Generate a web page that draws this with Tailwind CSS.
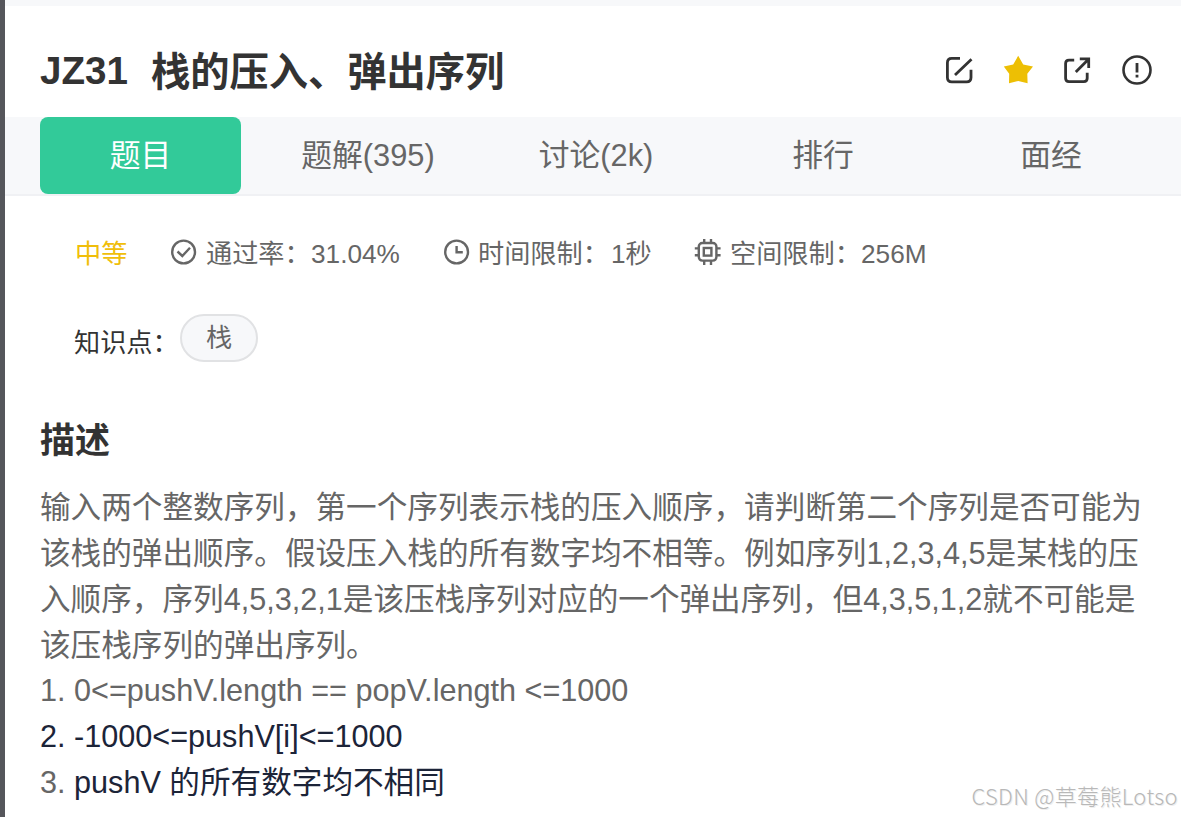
<!DOCTYPE html>
<html lang="zh-CN">
<head>
<meta charset="utf-8">
<title>JZ31 栈的压入、弹出序列</title>
<script src="https://cdn.jsdelivr.net/npm/@tailwindcss/browser@4"></script>
</head>
<body class="relative h-[817px] w-[1181px] overflow-hidden border-l-[5px] border-[#55565b] bg-white font-['Liberation_Sans','Noto_Sans_CJK_SC',sans-serif] whitespace-nowrap text-[#666]">
<div class="h-[6px] bg-[#f7f8fa]"></div>
<header class="flex h-[111px] items-center justify-between pt-[16px] pr-[28px] pl-[35px]">
  <h1 class="flex h-[46px] text-[39.25px] leading-[46px] font-bold text-[#333]"><span class="w-[111px] pt-[1px] text-[38.6px]">JZ31</span><span class="pt-[2px]">栈的压入、弹出序列</span></h1>
  <div class="flex h-[30px] items-center gap-[29px] text-[#333]">
    <svg class="size-[30px]" viewBox="0 0 30 30" fill="none" stroke="currentColor" stroke-width="2.8"><path d="M16 3.400H7.800Q3.400 3.400 3.400 7.800V22.400Q3.400 26.800 7.800 26.800H22.600Q27 26.800 27 22.400V14.800M11 20L27.500 4.200"/></svg>
    <svg class="size-[30px]" viewBox="0 0 30 30" fill="#edbf04"><path d="M15.200 .8L20.200 9.400L30 11.400L24.300 18.700L24.600 28.200L15.200 26L6 28.200L6.200 18.700L.8 11.400L10.200 9.400Z"/></svg>
    <svg class="size-[30px]" viewBox="0 0 30 30" fill="none" stroke="currentColor" stroke-width="2.8"><path d="M12.200 5.200H7Q3.600 5.200 3.600 8.600V23.200Q3.600 26.600 7 26.600H21.800Q25.200 26.600 25.200 23.200V17.800M13.800 17L26 4.800M17.800 3.800H26.700V13"/></svg>
    <svg class="size-[32px]" viewBox="0 0 32 32" fill="none" stroke="currentColor" stroke-width="2.600"><circle cx="16" cy="16" r="13.500"/><path d="M16 9V18.500M16 20.700V23.500" stroke-width="2.800"/></svg>
  </div>
</header>
<nav class="flex h-[79px] border-b-2 border-[#f0f1f4] bg-[#f7f8fa] pl-[35px] text-[30.8px] leading-[77px]">
  <div class="h-[77px] w-[201px] rounded-[8px] bg-[#32ca99] text-center text-white">题目</div>
  <div class="ml-[25px] w-[204px] text-center">题解(395)</div>
  <div class="ml-[24px] w-[204px] text-center">讨论(2k)</div>
  <div class="ml-[23px] w-[204px] text-center">排行</div>
  <div class="ml-[24px] w-[204px] text-center">面经</div>
</nav>
<section class="mt-[40px] flex h-[36px] items-center pl-[70px] text-[26.2px] leading-[36px]">
  <span class="w-[95px] text-[#f0be0a]">中等</span>
  <svg class="mt-[-4px] mr-[8px] size-[28px]" viewBox="0 0 28 28" fill="none" stroke="currentColor" stroke-width="2.400"><circle cx="13.600" cy="14" r="11.400"/><path d="M7.500 13.500L12.300 18L20 9.700"/></svg>
  <span class="flex w-[237px]"><span class="w-[105px]">通过率：</span>31.04%</span>
  <svg class="mt-[-4px] mr-[7px] size-[28px]" viewBox="0 0 28 28" fill="none" stroke="currentColor" stroke-width="2.400"><circle cx="13.600" cy="14" r="11.400"/><path d="M13.600 8V14.200H19.800"/></svg>
  <span class="flex w-[216px]"><span class="w-[133px]">时间限制：</span>1秒</span>
  <svg class="mt-[-4px] mr-[8px] size-[28px]" viewBox="0 0 28 28" fill="none" stroke="currentColor" stroke-width="2.400"><rect x="4.800" y="5" width="17.600" height="17.600" rx="3.500"/><rect x="9.800" y="10" width="7.600" height="7.600"/><path d="M10.200 1V5M17 1V5M10.200 22.600V27M17 22.600V27M.8 10.400H5M.8 17.200H5M22.200 10.400H26.600M22.200 17.200H26.600"/></svg>
  <span class="flex"><span class="w-[131px]">空间限制：</span>256M</span>
</section>
<section class="mt-[42px] flex h-[48px] pl-[69px] text-[26.2px]">
  <span class="mt-[11px] w-[106px] leading-[36px] text-[#333]">知识点：</span>
  <span class="h-[48px] w-[78px] rounded-full border-2 border-[#e1e2e4] bg-[#f7f8fa] text-center leading-[45px]">栈</span>
</section>
<h2 class="mt-[54px] h-[50px] pl-[35px] text-[35px] leading-[50px] font-bold text-[#333]">描述</h2>
<main class="pl-[35px] text-[30.62px]">
  <div class="mt-[18px] leading-[46px]">
    <p class="h-[46px]">输入两个整数序列，第一个序列表示栈的压入顺序，请判断第二个序列是否可能为</p>
    <p class="h-[46px]">该栈的弹出顺序。假设压入栈的所有数字均不相等。例如序列1,2,3,4,5是某栈的压</p>
    <p class="h-[46px]">入顺序，序列4,5,3,2,1是该压栈序列对应的一个弹出序列，但4,3,5,1,2就不可能是</p>
    <p class="h-[46px]">该压栈序列的弹出序列。</p>
  </div>
  <div class="-mt-px leading-[46px]">
    <p class="h-[46px]">1. 0&lt;=pushV.length == popV.length &lt;=1000</p>
    <p class="h-[46px] text-[#1c2438]">2. -1000&lt;=pushV[i]&lt;=1000</p>
    <p class="h-[46px]">3. <span class="text-[#1c2438]">pushV 的所有数字均不相同</span></p>
  </div>
</main>
<div class="absolute right-[3px] bottom-[6px] font-['Noto_Sans_CJK_SC',sans-serif] text-[22px] leading-[32px] font-light tracking-[0.35px] text-[#b8b8b8] [text-shadow:1px_1px_0_#eee]">CSDN @草莓熊Lotso</div>
</body>
</html>
